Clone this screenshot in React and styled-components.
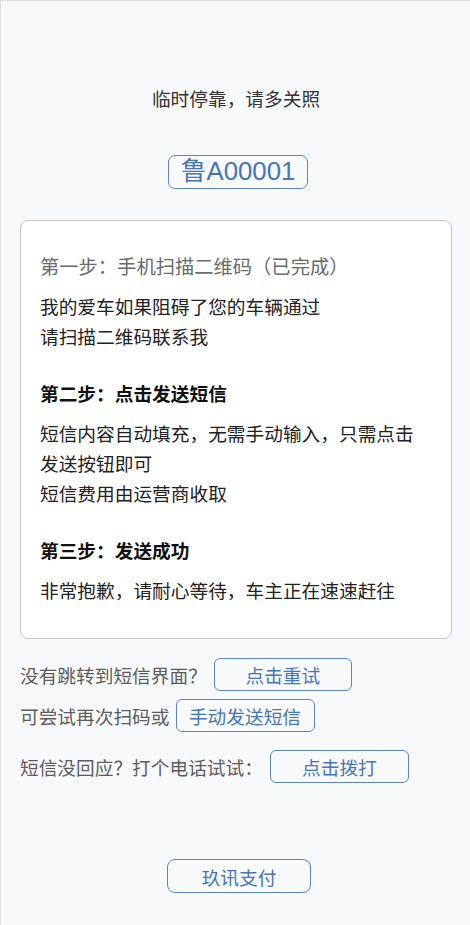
import React from 'react';
import styled, { createGlobalStyle } from 'styled-components';

const GlobalStyle = createGlobalStyle`
    html, body {
        margin: 0;
        padding: 0;
        background: #f8f9fa;
    }
    * {
        box-sizing: border-box;
    }
`;

const StyledPage = styled.div`
    display: flex;
    flex-direction: column;
    align-items: center;
    min-height: 925px;
    padding: 84px 18px 0 19px;
    border-top: 1px solid #dedede;
    border-left: 1px solid #dedede;
    background: #f8f9fa;
    font-family: "Liberation Sans", "Noto Sans CJK SC", sans-serif;
    font-size: 18.7px;
    color: #333;
`;

const StyledTitle = styled.div`
    line-height: 30px;
    color: #333;
`;

const StyledPlate = styled.div`
    margin-top: 40px;
    height: 34px;
    padding: 0 12px;
    border: 1.5px solid #5a86c2;
    border-radius: 7px;
    font-size: 25.8px;
    line-height: 31px;
    color: #4776b6;
    transform: translateX(2px);
`;

const StyledCard = styled.div`
    align-self: stretch;
    margin-top: 31px;
    padding: 32px 19px 31px;
    background: #fff;
    border: 1px solid #c6c6c6;
    border-radius: 8px;
`;

const StyledStep = styled.div`
    line-height: 30px;
    margin-top: ${(p) => p.$first ? '0' : '27px'};
    font-size: ${(p) => p.$done ? '19.3px' : '18.7px'};
    color: ${(p) => p.$done ? '#6a6a6a' : '#111'};
    font-weight: ${(p) => p.$done ? 400 : 700};
`;

const StyledText = styled.div`
    margin-top: 10px;
    line-height: 30px;
    color: #222;
`;

const StyledRow = styled.div`
    align-self: stretch;
    display: flex;
    flex-direction: row;
    align-items: center;
    margin-top: ${(p) => p.$gap};
    color: #5c5c5c;
`;

const StyledButton = styled.button`
    width: ${(p) => p.$width || '138px'};
    height: 33px;
    margin-left: ${(p) => p.$offset || '6px'};
    padding: 0;
    background: transparent;
    border: 1px solid #5a86c2;
    border-radius: 6px;
    font-family: inherit;
    font-size: 18.7px;
    color: #4776b6;
`;

const StyledPay = styled(StyledButton)`
    margin-top: 76px;
    margin-left: 0;
    height: 34px;
    border-width: 1.5px;
    border-radius: 8px;
    transform: translateX(3px);
`;

function App() {
    return (
        <>
            <GlobalStyle />
            <StyledPage>
                <StyledTitle>临时停靠，请多关照</StyledTitle>
                <StyledPlate>鲁A00001</StyledPlate>
                <StyledCard>
                    <StyledStep $first $done>第一步：手机扫描二维码（已完成）</StyledStep>
                    <StyledText>
                        我的爱车如果阻碍了您的车辆通过<br />
                        请扫描二维码联系我
                    </StyledText>
                    <StyledStep>第二步：点击发送短信</StyledStep>
                    <StyledText>
                        短信内容自动填充，无需手动输入，只需点击发送按钮即可<br />
                        短信费用由运营商收取
                    </StyledText>
                    <StyledStep>第三步：发送成功</StyledStep>
                    <StyledText>非常抱歉，请耐心等待，车主正在速速赶往</StyledText>
                </StyledCard>
                <StyledRow $gap="19px">
                    没有跳转到短信界面？
                    <StyledButton $offset="7px">点击重试</StyledButton>
                </StyledRow>
                <StyledRow $gap="8px">
                    可尝试再次扫码或
                    <StyledButton $width="139px">手动发送短信</StyledButton>
                </StyledRow>
                <StyledRow $gap="18px">
                    短信没回应？打个电话试试：
                    <StyledButton $width="139px" $offset="7px">点击拨打</StyledButton>
                </StyledRow>
                <StyledPay $width="144px">玖讯支付</StyledPay>
            </StyledPage>
        </>
    );
}

export default App;
